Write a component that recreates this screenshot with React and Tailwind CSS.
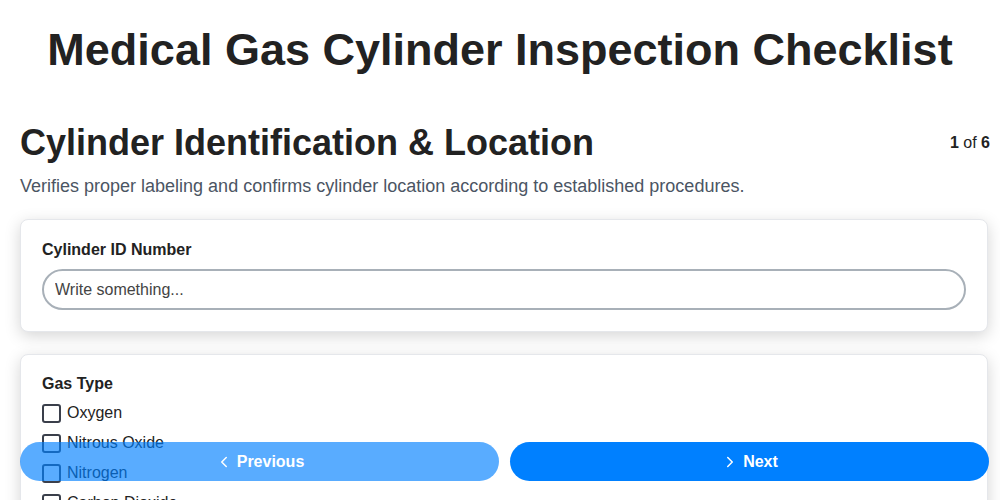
import { ChevronLeft, ChevronRight } from 'lucide-react';

const GASES = ['Oxygen', 'Nitrous Oxide', 'Nitrogen', 'Carbon Dioxide', 'Medical Air', 'Helium'];

export default function App() {
  return (
    <div className="min-h-screen bg-white text-[#222] font-['Liberation_Sans',Arial,sans-serif] pl-5 pr-[10px] pb-24">
      <h1 className="mr-[10px] text-center text-[45px] font-bold leading-[54px] pt-[23px]">
        Medical Gas Cylinder Inspection Checklist
      </h1>

      <div className="mt-[44px] flex items-start justify-between">
        <h2 className="text-[36px] font-bold leading-[44px]">Cylinder Identification &amp; Location</h2>
        <div className="text-[16px] leading-[20px] pt-[12px]">
          <span className="font-bold">1</span> of <span className="font-bold">6</span>
        </div>
      </div>
      <p className="mt-[10px] text-[18px] leading-[22px] text-[#4b5563]">
        Verifies proper labeling and confirms cylinder location according to established procedures.
      </p>

      {/* Text field */}
      <section className="mt-[22px] mr-[2px] rounded-lg border border-[#e5e7eb] bg-white px-[21px] pt-[20px] pb-[21px] shadow-[0_4px_16px_rgba(0,0,0,0.17)]">
        <label className="block text-[16px] font-bold leading-[20px]">Cylinder ID Number</label>
        <input
          type="text"
          placeholder="Write something..."
          className="mt-[9px] block w-full h-[41px] rounded-full border-2 border-[#a8b0b8] px-[11px] text-[16px] placeholder:text-[#444] outline-none"
        />
      </section>

      {/* Checkbox field */}
      <section className="mt-[22px] mr-[2px] rounded-lg border border-[#e5e7eb] bg-white px-[21px] pt-[19px] pb-[21px] shadow-[0_4px_16px_rgba(0,0,0,0.17)]">
        <div className="text-[16px] font-bold leading-[20px]">Gas Type</div>
        <div className="mt-[9px] flex flex-col gap-[10px]">
          {GASES.map((g) => (
            <label key={g} className="flex items-center gap-[6px] text-[16px] leading-[20px]">
              <span className="inline-block w-[19px] h-[19px] rounded-[3px] border-2 border-[#3a3f4b]" />
              {g}
            </label>
          ))}
        </div>
      </section>

      <div className="fixed bottom-[19px] left-[20px] right-[11px] flex gap-[11px]">
        <button className="flex-1 h-[39px] rounded-full bg-[#0080ff] opacity-65 text-white font-bold text-[16px] flex items-center justify-center gap-[4px]">
          <ChevronLeft className="w-[18px] h-[18px]" strokeWidth={2} />
          Previous
        </button>
        <button className="flex-1 h-[39px] rounded-full bg-[#0080ff] text-white font-bold text-[16px] flex items-center justify-center gap-[4px]">
          <ChevronRight className="w-[18px] h-[18px]" strokeWidth={2} />
          Next
        </button>
      </div>
    </div>
  );
}
